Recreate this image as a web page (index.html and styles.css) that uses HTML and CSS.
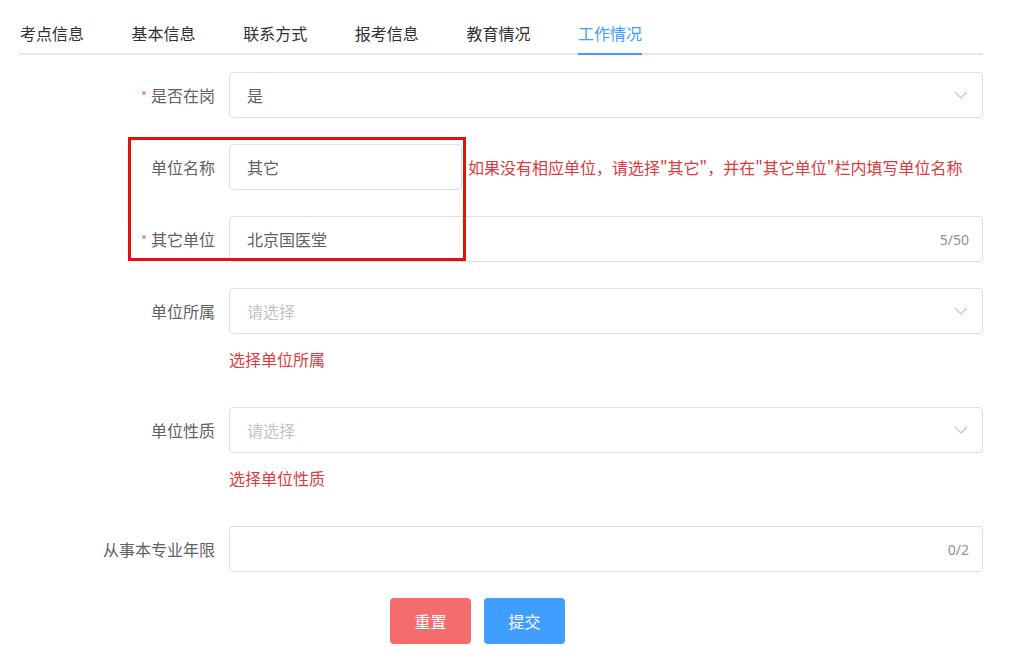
FILE: index.html
```html
<!DOCTYPE html>
<html lang="zh">
<head>
<meta charset="utf-8">
<link rel="stylesheet" href="styles.css">
</head>
<body>
<div class="page">
  <div class="tabs">
    <div class="tab">考点信息</div>
    <div class="tab">基本信息</div>
    <div class="tab">联系方式</div>
    <div class="tab">报考信息</div>
    <div class="tab">教育情况</div>
    <div class="tab active">工作情况</div>
  </div>

  <form class="form">
    <div class="item">
      <label class="label"><span class="req">*</span>是否在岗</label>
      <div class="control">
        <div class="input select"><span class="value">是</span>
          <svg class="chev" width="14" height="8" viewBox="0 0 14 8"><path d="M1 1 L7 7 L13 1" fill="none" stroke="#c0c4cc" stroke-width="1.2"/></svg>
        </div>
      </div>
    </div>

    <div class="item">
      <label class="label">单位名称</label>
      <div class="control inline">
        <div class="input short"><span class="value">其它</span></div>
        <span class="hint">如果没有相应单位，请选择"其它"，并在"其它单位"栏内填写单位名称</span>
      </div>
    </div>

    <div class="item">
      <label class="label"><span class="req">*</span>其它单位</label>
      <div class="control">
        <div class="input"><span class="value">北京国医堂</span><span class="count">5/50</span></div>
      </div>
    </div>

    <div class="item">
      <label class="label">单位所属</label>
      <div class="control">
        <div class="input select"><span class="placeholder">请选择</span>
          <svg class="chev" width="14" height="8" viewBox="0 0 14 8"><path d="M1 1 L7 7 L13 1" fill="none" stroke="#c0c4cc" stroke-width="1.2"/></svg>
        </div>
        <div class="error">选择单位所属</div>
      </div>
    </div>

    <div class="item">
      <label class="label">单位性质</label>
      <div class="control">
        <div class="input select"><span class="placeholder">请选择</span>
          <svg class="chev" width="14" height="8" viewBox="0 0 14 8"><path d="M1 1 L7 7 L13 1" fill="none" stroke="#c0c4cc" stroke-width="1.2"/></svg>
        </div>
        <div class="error">选择单位性质</div>
      </div>
    </div>

    <div class="item">
      <label class="label">从事本专业年限</label>
      <div class="control">
        <div class="input"><span class="value"></span><span class="count">0/2</span></div>
      </div>
    </div>

    <div class="buttons">
      <button type="button" class="btn btn-reset">重置</button>
      <button type="button" class="btn btn-submit">提交</button>
    </div>

    <div class="highlight"></div>
  </form>
</div>
</body>
</html>
```

FILE: styles.css
```css
* { box-sizing: border-box; }
html, body {
  margin: 0;
  padding: 0;
  background: #fff;
  font-family: "Noto Sans CJK SC", "Noto Sans", sans-serif;
  font-size: 16px;
  color: #606266;
}
.page {
  width: 1013px;
  padding: 14px 30px 0 19px;
}
.tabs {
  display: flex;
  gap: 47.6px;
  height: 41px;
  border-bottom: 2px solid #e4e7ed;
  padding-left: 1px;
}
.tab {
  position: relative;
  height: 39px;
  line-height: 38px;
  color: #303133;
  font-size: 16px;
  white-space: nowrap;
}
.tab.active { color: #409eff; }
.tab.active::after {
  content: "";
  position: absolute;
  left: 0;
  right: 0;
  bottom: -2px;
  height: 2px;
  background: #409eff;
}
.form {
  position: relative;
  margin-top: 17px;
}
.item {
  display: flex;
  margin-bottom: 26px;
}
.label {
  width: 210px;
  flex: none;
  padding-right: 14px;
  text-align: right;
  line-height: 46px;
  height: 46px;
  color: #606266;
  white-space: nowrap;
}
.req {
  color: #f56c6c;
  margin-right: 4px;
  font-size: 13px;
  vertical-align: 1px;
}
.control { flex: 1; }
.control.inline {
  display: flex;
  align-items: center;
  gap: 6px;
}
.input {
  display: flex;
  align-items: center;
  height: 46px;
  border: 1px solid #dcdfe6;
  border-radius: 4px;
  padding: 0 13px 0 17px;
  background: #fff;
}
.input.short { width: 233px; flex: none; }
.value { flex: 1; color: #606266; }
.placeholder { flex: 1; color: #c0c4cc; }
.count {
  color: #909399;
  font-size: 14px;
  font-family: "Noto Sans", sans-serif;
}
.chev { margin-right: 1px; }
.hint {
  color: #e0393e;
  white-space: nowrap;
  font-size: 16px;
  letter-spacing: 0;
}
.error {
  color: #e0393e;
  margin-top: 14px;
  line-height: 22px;
  height: 33px;
}
.buttons {
  display: flex;
  gap: 13px;
  padding-left: 371px;
}
.btn {
  width: 81px;
  height: 46px;
  border: none;
  border-radius: 4px;
  color: #fff;
  font-family: "Noto Sans CJK SC", sans-serif;
  font-size: 16px;
  cursor: pointer;
}
.btn-reset { background: #f56c6c; }
.btn-submit { background: #409eff; }
.highlight {
  position: absolute;
  left: 109px;
  top: 65px;
  width: 338px;
  height: 124px;
  border: 3px solid #e50f14;
  pointer-events: none;
}
```
